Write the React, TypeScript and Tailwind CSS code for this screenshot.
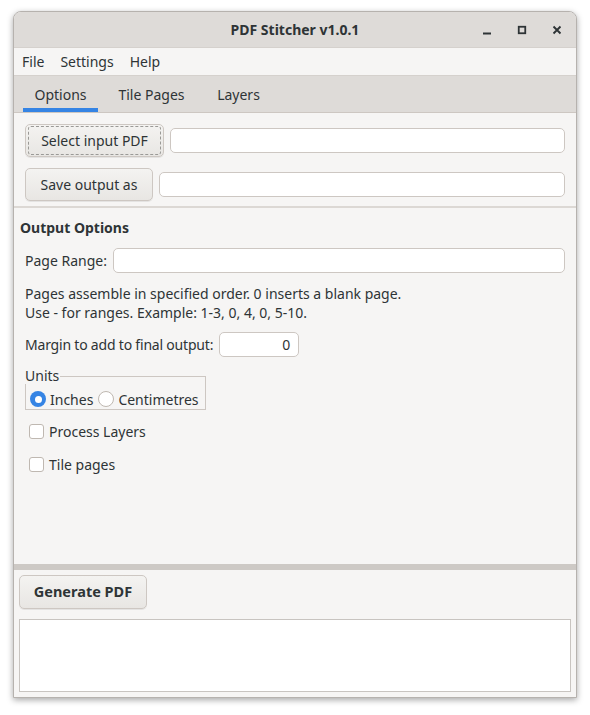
import React from 'react';

const font = { fontFamily: '"Noto Sans", "Open Sans", sans-serif' };

function Entry({ className = '', value = '' }: { className?: string; value?: string }) {
  return (
    <div
      className={`h-[25px] rounded-[5px] border border-[#cdc7c2] bg-white px-2 text-right text-[14px] leading-[23px] text-[#2e3436] ${className}`}
    >
      {value}
    </div>
  );
}

function Button({ label, focused = false, bold = false, className = '' }: { label: string; focused?: boolean; bold?: boolean; className?: string }) {
  return (
    <div
      className={`flex h-[33px] items-center justify-center rounded-[5px] border border-[#cdc7c2] bg-gradient-to-b from-[#f4f3f1] to-[#e8e6e3] text-[#2e3436] shadow-[0_1px_0_rgba(0,0,0,0.07)] ${bold ? 'text-[14.5px] font-bold' : 'text-[14px]'} ${className}`}
    >
      <div className={focused ? 'flex h-[29px] w-[calc(100%-4px)] items-center justify-center rounded-[3px] border border-dashed border-[#9a9996]' : ''}>
        {label}
      </div>
    </div>
  );
}

function Checkbox({ label }: { label: string }) {
  return (
    <div className="flex items-center gap-[5px] pl-[9px] text-[14px] text-[#2e3436]">
      <div className="h-[15px] w-[15px] rounded-[3px] border border-[#bfb8b1] bg-white" />
      <span>{label}</span>
    </div>
  );
}

export default function App() {
  return (
    <div className="h-[715px] w-[590px] bg-white pl-[13px] pt-[11px]" style={font}>
      <div className="flex h-[687px] w-[564px] flex-col overflow-hidden rounded-t-[8px] border border-[#b6b2ae] bg-[#f6f5f4] shadow-[0_2px_6px_rgba(0,0,0,0.35)]">
        {/* Title bar */}
        <div className="relative flex h-[36px] shrink-0 items-center justify-center border-b border-[#d5d1cd] bg-[#dedbd8]">
          <span className="text-[14px] font-bold text-[#2e3436]">PDF Stitcher v1.0.1</span>
          <div className="absolute right-[14px] top-0 flex h-full items-center gap-[25px] text-[#2e3436]">
            <svg width="10" height="10" viewBox="0 0 10 10">
              <rect x="1" y="7.5" width="8" height="2" fill="#2e3436" />
            </svg>
            <svg width="10" height="10" viewBox="0 0 10 10">
              <rect x="1.75" y="1.75" width="6.5" height="6.5" fill="none" stroke="#2e3436" strokeWidth="1.8" />
            </svg>
            <svg width="10" height="10" viewBox="0 0 10 10">
              <path d="M1.5 1.5 L8.5 8.5 M8.5 1.5 L1.5 8.5" stroke="#2e3436" strokeWidth="1.9" />
            </svg>
          </div>
        </div>

        {/* Menu bar */}
        <div className="flex h-[28px] shrink-0 items-center gap-[16px] border-b border-[#d5d1cd] bg-[#f6f5f4] pl-[8px] text-[14px] text-[#2e3436]">
          <span>File</span>
          <span>Settings</span>
          <span>Help</span>
        </div>

        {/* Tabs */}
        <div className="flex h-[37px] shrink-0 items-stretch border-b border-[#cdc7c2] bg-[#dedbd8] pl-[9px] text-[14px] text-[#2e3436]">
          <div className="flex w-[75px] items-center justify-center border-b-[4px] border-[#3584e4] pt-[4px]">Options</div>
          <div className="flex w-[107px] items-center justify-center">Tile Pages</div>
          <div className="flex w-[67px] items-center justify-center">Layers</div>
        </div>

        {/* Content */}
        <div className="flex flex-1 flex-col">
          <div className="flex flex-col gap-[11px] px-[11px] pt-[11px]">
            <div className="flex items-center gap-[6px]">
              <Button label="Select input PDF" focused className="w-[139px]" />
              <Entry className="flex-1" />
            </div>
            <div className="flex items-center gap-[6px]">
              <Button label="Save output as" className="w-[128px]" />
              <Entry className="flex-1" />
            </div>
          </div>
          <div className="mt-[5px] h-[2px] bg-[#dcd8d4]" />

          <div className="px-[6px] pt-[10px] text-[14px] text-[#2e3436]">
            <div className="font-bold leading-[20px]">Output Options</div>
            <div className="mt-[10px] flex items-center gap-[6px] pl-[5px] pr-[5px]">
              <span>Page Range:</span>
              <Entry className="flex-1" />
            </div>
            <div className="mt-[11px] pl-[5px] leading-[19px]">
              <div>Pages assemble in specified order. 0 inserts a blank page.</div>
              <div>Use - for ranges. Example: 1-3, 0, 4, 0, 5-10.</div>
            </div>
            <div className="mt-[10px] flex items-center gap-[6px] pl-[5px]">
              <span className="tracking-[-0.2px]">Margin to add to final output:</span>
              <Entry value="0" className="w-[80px]" />
            </div>
            <div className="relative ml-[5px] mt-[19px] w-[181px]">
              <div className="absolute -top-[9px] left-0 bg-[#f6f5f4] pr-[1px] leading-[17px]">Units</div>
              <div className="flex h-[34px] items-center gap-[5px] border border-[#cdc7c2] pl-[4px] pt-[12px]">
                <div className="flex items-center gap-[4px]">
                  <div className="flex h-[16px] w-[16px] items-center justify-center rounded-full bg-[#3584e4]">
                    <div className="h-[7px] w-[7px] rounded-full bg-white" />
                  </div>
                  <span>Inches</span>
                </div>
                <div className="flex items-center gap-[4px]">
                  <div className="h-[16px] w-[16px] rounded-full border border-[#bfb8b1] bg-white" />
                  <span>Centimetres</span>
                </div>
              </div>
            </div>
            <div className="mt-[11px] flex flex-col gap-[12px]">
              <Checkbox label="Process Layers" />
              <Checkbox label="Tile pages" />
            </div>
          </div>
        </div>

        {/* Pane separator */}
        <div className="h-[6px] shrink-0 bg-[#cdc9c5]" />

        {/* Bottom */}
        <div className="flex h-[127px] shrink-0 flex-col gap-[10px] px-[5px] pb-[5px] pt-[5px]">
          <Button label="Generate PDF" bold className="h-[34px] w-[128px]" />
          <div className="flex-1 border border-[#c8c4c0] bg-white" />
        </div>
      </div>
    </div>
  );
}
